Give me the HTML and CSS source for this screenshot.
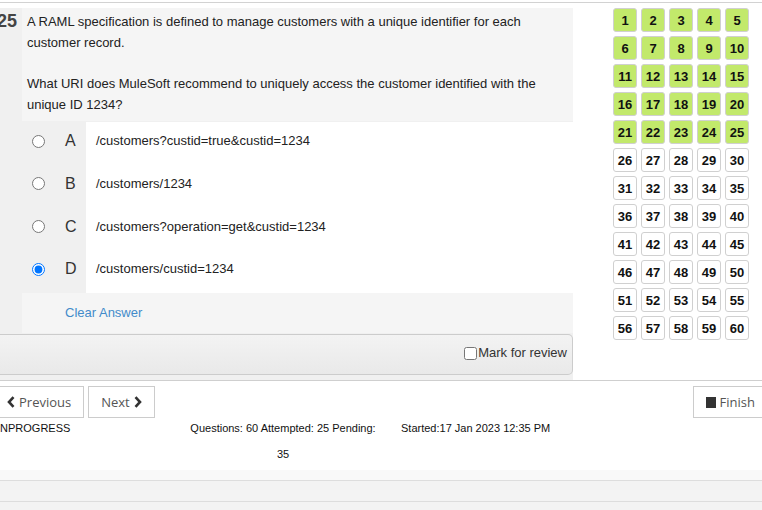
FILE: index.html
```html
<!DOCTYPE html>
<html>
<head>
<meta charset="utf-8">
<link rel="stylesheet" href="styles.css">
</head>
<body>
<div class="page">
  <div class="toprule"></div>
  <div class="main">
    <div class="panel">
      <div class="qrow">
        <div class="qnum">25</div>
        <div class="qtext">A RAML specification is defined to manage customers with a unique identifier for each customer record.<br><br>What URI does MuleSoft recommend to uniquely access the customer identified with the unique ID 1234?</div>
      </div>
      <div class="opts">
        <div class="opt"><div class="optkey"><input type="radio" name="a"><span class="letter">A</span></div><div class="optval">/customers?custid=true&amp;custid=1234</div></div>
        <div class="opt"><div class="optkey"><input type="radio" name="a"><span class="letter">B</span></div><div class="optval">/customers/1234</div></div>
        <div class="opt"><div class="optkey"><input type="radio" name="a"><span class="letter">C</span></div><div class="optval">/customers?operation=get&amp;custid=1234</div></div>
        <div class="opt"><div class="optkey"><input type="radio" name="a" checked><span class="letter">D</span></div><div class="optval">/customers/custid=1234</div></div>
      </div>
      <div class="clearrow"><div class="clearpad"></div><div class="clearcell"><a class="clearlink">Clear Answer</a></div></div>
      <div class="markbox"><label class="mark"><input type="checkbox">Mark for review</label></div>
    </div>
    <div class="grid">
      <span class="q done">1</span><span class="q done">2</span><span class="q done">3</span><span class="q done">4</span><span class="q done">5</span>
      <span class="q done">6</span><span class="q done">7</span><span class="q done">8</span><span class="q done">9</span><span class="q done">10</span>
      <span class="q done">11</span><span class="q done">12</span><span class="q done">13</span><span class="q done">14</span><span class="q done">15</span>
      <span class="q done">16</span><span class="q done">17</span><span class="q done">18</span><span class="q done">19</span><span class="q done">20</span>
      <span class="q done">21</span><span class="q done">22</span><span class="q done">23</span><span class="q done">24</span><span class="q done">25</span>
      <span class="q">26</span><span class="q">27</span><span class="q">28</span><span class="q">29</span><span class="q">30</span>
      <span class="q">31</span><span class="q">32</span><span class="q">33</span><span class="q">34</span><span class="q">35</span>
      <span class="q">36</span><span class="q">37</span><span class="q">38</span><span class="q">39</span><span class="q">40</span>
      <span class="q">41</span><span class="q">42</span><span class="q">43</span><span class="q">44</span><span class="q">45</span>
      <span class="q">46</span><span class="q">47</span><span class="q">48</span><span class="q">49</span><span class="q">50</span>
      <span class="q">51</span><span class="q">52</span><span class="q">53</span><span class="q">54</span><span class="q">55</span>
      <span class="q">56</span><span class="q">57</span><span class="q">58</span><span class="q">59</span><span class="q">60</span>
    </div>
  </div>
  <div class="footer">
    <div class="btnrow">
      <div class="navgroup">
        <button class="btn"><svg class="chev" viewBox="0 0 8 12" width="8" height="12"><path d="M6.5 1.2 L2 6 L6.5 10.8" fill="none" stroke="#333" stroke-width="2.6"/></svg>Previous</button>
        <button class="btn">Next<svg class="chev chev-r" viewBox="0 0 8 12" width="8" height="12"><path d="M1.5 1.2 L6 6 L1.5 10.8" fill="none" stroke="#333" stroke-width="2.6"/></svg></button>
      </div>
      <button class="btn"><span class="stop"></span>Finish</button>
    </div>
    <div class="status">
      <div class="st st1">INPROGRESS</div>
      <div class="st st2"><div class="nowrap">Questions: 60 Attempted: 25 Pending:</div><div class="pend">35</div></div>
      <div class="st st3">Started:17 Jan 2023 12:35 PM</div>
    </div>
  </div>
  <div class="band1"></div>
  <div class="band2"></div>
  <div class="band3"></div>
</div>
</body>
</html>
```

FILE: styles.css
```css
html, body {
  margin: 0;
  padding: 0;
  overflow: hidden;
  background: #fff;
}
body {
  font-family: "Liberation Sans", Arial, sans-serif;
  color: #222;
}
.page {
  width: 762px;
}
.toprule {
  margin-top: 2px;
  border-top: 1px solid #d2d2d2;
}
.main {
  display: flex;
  align-items: flex-start;
  padding-top: 5px;
}
.panel {
  width: 573px;
  background: #f0f0f0;
}
.qrow {
  display: flex;
  height: 114px;
}
.qnum {
  width: 22px;
  flex: none;
  box-sizing: border-box;
  padding-top: 3px;
  margin-left: -3px;
  padding-right: 0;
  font-size: 18px;
  line-height: 20px;
  font-weight: bold;
  color: #444;
}
.qtext {
  flex: 1;
  background: #f5f5f5;
  padding: 4px 8px 0 5px;
  margin-left: 3px;
  margin-bottom: 1px;
  font-size: 13px;
  line-height: 20.8px;
  color: #222;
}
.opts {
  display: flex;
  flex-direction: column;
}
.opt {
  display: flex;
  height: 42.75px;
}
.optkey {
  width: 86px;
  flex: none;
  box-sizing: border-box;
  display: flex;
  align-items: flex-start;
  padding-left: 32px;
  padding-top: 9px;
  height: 20px;
}
.optkey input {
  margin: 3.5px 0 0 0;
  width: 13px;
  height: 13px;
}
.letter {
  margin-left: 20px;
  font-size: 16px;
  line-height: 20px;
  color: #333;
}
.optval {
  flex: 1;
  background: #fff;
  padding: 9px 0 0 10px;
  font-size: 13px;
  line-height: 20px;
  color: #222;
}
.clearrow {
  display: flex;
  height: 40px;
}
.clearpad {
  width: 22px;
  flex: none;
}
.clearcell {
  flex: 1;
  background: #f5f5f5;
  padding: 10px 0 0 43px;
  font-size: 13px;
  line-height: 19px;
}
.clearlink {
  color: #428bca;
}
.markbox {
  height: 39px;
  margin-top: 1px;
  border: 1px solid #cccccc;
  border-left: none;
  border-radius: 0 5px 5px 0;
  background: linear-gradient(#f3f3f3, #e9e9e9);
  display: flex;
  justify-content: flex-end;
  align-items: center;
  padding-right: 5px;
  margin-bottom: 5px;
}
.mark {
  display: flex;
  align-items: center;
  font-size: 13px;
  line-height: 16px;
  color: #333;
  padding-bottom: 3px;
}
.mark input {
  margin: 0 1px 0 0;
  width: 13px;
  height: 13px;
}
.grid {
  margin-left: 40px;
  display: grid;
  grid-template-columns: repeat(5, 24px);
  grid-auto-rows: 24px;
  gap: 4px;
}
.q {
  box-sizing: border-box;
  border: 1px solid #d0d0d0;
  border-radius: 3px;
  background: #fff;
  display: flex;
  align-items: center;
  justify-content: center;
  font-size: 13px;
  font-weight: bold;
  color: #111;
}
.q.done {
  background: #c2e96b;
}
.footer {
  margin-left: -6px;
  width: 774px;
  border-top: 1px solid #cfcfcf;
  background: #fff;
  height: 89px;
}
.btnrow {
  display: flex;
  justify-content: space-between;
  padding-top: 5px;
}
.navgroup {
  display: flex;
  gap: 4px;
}
.btn {
  font-family: "Open Sans", sans-serif;
  font-size: 13px;
  line-height: 18px;
  color: #555;
  background: #fff;
  border: 1px solid #cccccc;
  border-radius: 0;
  padding: 6px 12px;
  display: flex;
  align-items: center;
  margin: 0;
}
.chev {
  margin-right: 4px;
}
.chev-r {
  margin-right: 0;
  margin-left: 4px;
}
.stop {
  display: inline-block;
  width: 10px;
  height: 11px;
  background: #333;
  margin-right: 4px;
}
.status {
  display: flex;
  margin-top: 2px;
  font-size: 11px;
  line-height: 16px;
  color: #111;
}
.st1 {
  width: 196px;
  box-sizing: border-box;
  padding-left: 3px;
}
.st2 {
  width: 186px;
  text-align: center;
}
.nowrap {
  white-space: nowrap;
}
.pend {
  margin-top: 10px;
}
.st3 {
  margin-left: 25px;
}
.band1 {
  height: 10px;
  background: #f9f9f9;
}
.band2 {
  height: 20px;
  border-top: 1px solid #dddddd;
  background: #f3f3f3;
}
.band3 {
  height: 9px;
  border-top: 1px solid #dddddd;
  background: #f3f3f3;
}
```
